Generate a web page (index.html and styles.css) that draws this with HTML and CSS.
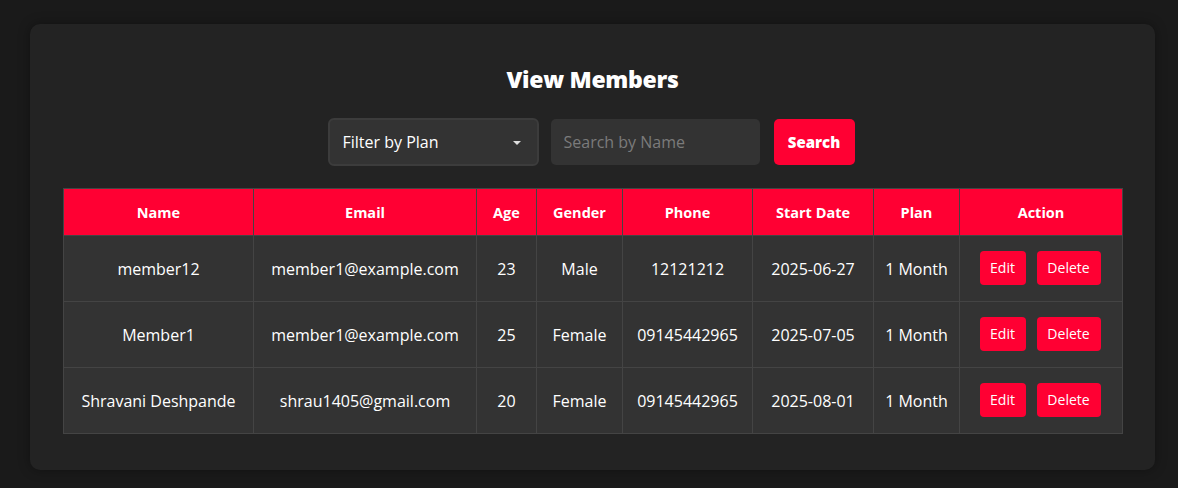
FILE: index.html
```html
<!DOCTYPE html>
<html>
<head>
<meta charset="utf-8">
<link rel="stylesheet" href="styles.css">
</head>
<body>
<div class="card">
  <h2 class="title">View Members</h2>
  <div class="controls">
    <div class="select">
      <span>Filter by Plan</span>
      <svg class="caret" width="8" height="4" viewBox="0 0 8 4"><path d="M0 0h8L4 4z" fill="#ddd"/></svg>
    </div>
    <div class="input">Search by Name</div>
    <button class="btn-search">Search</button>
  </div>
  <table class="members">
    <colgroup>
      <col style="width:190px"><col style="width:223px"><col style="width:60px"><col style="width:86px"><col style="width:130px"><col style="width:121px"><col style="width:86px"><col style="width:163px">
    </colgroup>
    <thead>
      <tr><th>Name</th><th>Email</th><th>Age</th><th>Gender</th><th>Phone</th><th>Start Date</th><th>Plan</th><th>Action</th></tr>
    </thead>
    <tbody>
      <tr><td>member12</td><td>member1@example.com</td><td>23</td><td>Male</td><td>12121212</td><td>2025-06-27</td><td>1 Month</td><td><div class="actions"><button class="btn-sm edit">Edit</button><button class="btn-sm del">Delete</button></div></td></tr>
      <tr><td>Member1</td><td>member1@example.com</td><td>25</td><td>Female</td><td>09145442965</td><td>2025-07-05</td><td>1 Month</td><td><div class="actions"><button class="btn-sm edit">Edit</button><button class="btn-sm del">Delete</button></div></td></tr>
      <tr><td>Shravani Deshpande</td><td>shrau1405@gmail.com</td><td>20</td><td>Female</td><td>09145442965</td><td>2025-08-01</td><td>1 Month</td><td><div class="actions"><button class="btn-sm edit">Edit</button><button class="btn-sm del">Delete</button></div></td></tr>
    </tbody>
  </table>
</div>
</body>
</html>
```
FILE: styles.css
```css
* { box-sizing: border-box; }
html, body { margin: 0; background: #1a1a1a; height: 100%; }
body {
  font-family: "Open Sans", "Noto Sans", sans-serif;
  color: #fff;
  padding-top: 24px;
}
.card {
  margin-left: 30px;
  width: 1125px;
  height: 446px;
  background: #232323;
  border-radius: 10px;
  padding: 33px 33px;
  box-shadow: 0 0 12px rgba(0,0,0,0.35);
}
.title {
  margin: 0;
  text-align: center;
  font-size: 23px;
  font-weight: 800;
  line-height: 44px;
  letter-spacing: -0.3px;
}
.controls {
  display: flex;
  justify-content: center;
  align-items: center;
  gap: 12px;
  margin-top: 17px;
  padding-right: 3px;
}
.select {
  width: 211px;
  height: 48px;
  background: #333;
  border: 2px solid #3c3c3c;
  border-radius: 6px;
  display: flex;
  align-items: center;
  justify-content: space-between;
  padding: 0 16px 0 13px;
  font-size: 16px;
  color: #fff;
}
.caret { margin-top: 1px; }
.input {
  width: 209px;
  height: 46px;
  background: #333;
  border-radius: 5px;
  display: flex;
  align-items: center;
  padding: 0 13px;
  font-size: 16px;
  color: #7b7b7b;
  margin-right: 2px;
}
.btn-search {
  width: 81px;
  height: 46px;
  background: #ff0033;
  border: none;
  border-radius: 5px;
  color: #fff;
  font-family: inherit;
  font-weight: 800;
  font-size: 15px;
}
.members {
  margin-top: 22px;
  width: 1059px;
  table-layout: fixed;
  border-collapse: collapse;
  font-size: 16px;
}
.members th {
  background: #ff0033;
  height: 47px;
  font-weight: 700;
  font-size: 14.5px;
  border: 1px solid #444;
  text-align: center;
}
.members td {
  background: #333;
  height: 66px;
  border: 1px solid #444;
  text-align: center;
  white-space: nowrap;
}
.actions {
  display: flex;
  justify-content: center;
  gap: 11px;
  margin: -2px 0 0 -2px;
}
.btn-sm {
  height: 34px;
  background: #ff0033;
  border: none;
  border-radius: 4px;
  color: #fff;
  font-family: inherit;
  font-size: 14px;
  padding: 0;
}
.edit { width: 46px; }
.del { width: 64px; }
```
